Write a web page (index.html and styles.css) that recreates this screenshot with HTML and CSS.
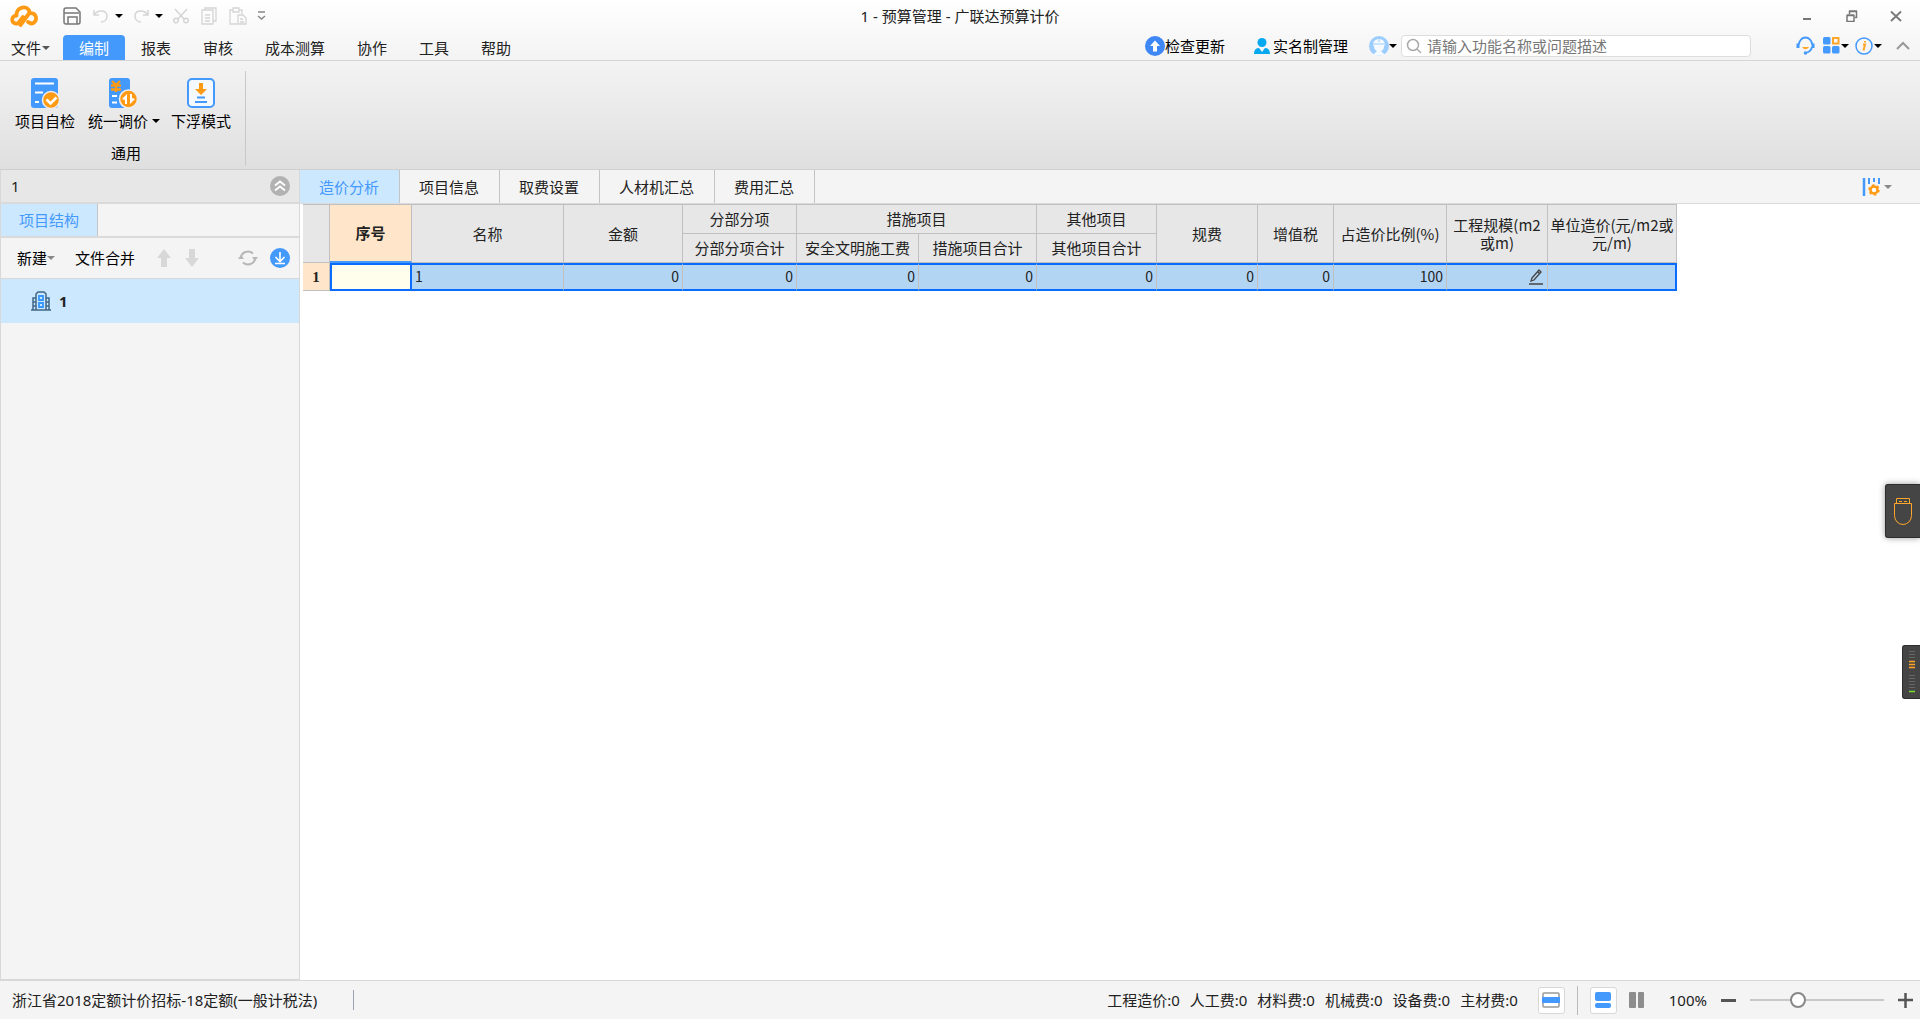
FILE: index.html
```html
<!DOCTYPE html>
<html lang="zh-CN">
<head>
<meta charset="utf-8">
<title>1 - 预算管理 - 广联达预算计价</title>
<link rel="stylesheet" href="styles.css">
</head>
<body>
<header class="top">
  <div class="titlebar">
    <div class="quick">
      <svg class="logo" width="30" height="24" viewBox="0 0 30 24" fill="none" stroke="#ff9a14" stroke-width="3.800" stroke-linecap="round" stroke-linejoin="round"><path d="M14 13L9 19.500C2 21 1 12 7.500 11.500C7 2 19 1 20.500 8M11.500 21L20 9.500C28 7 30 19 22 19.500L19 18"/></svg>
      <button class="tool" aria-label="保存"><svg width="18" height="18" viewBox="0 0 18 18" fill="none" stroke="#777" stroke-width="1.500"><path d="M3 1h10l4 4v10a2 2 0 0 1-2 2H3a2 2 0 0 1-2-2V3a2 2 0 0 1 2-2zM1 6h15M5 17V10h9v7"/></svg></button>
      <button class="tool undo" aria-label="撤销"><svg width="16" height="16" viewBox="0 0 16 16" fill="none" stroke="#d5d5d5" stroke-width="1.500"><path d="M1 2v5h5M1 7c4-6 13-5 13 1 0 4-3 6-6 6"/></svg><i class="caret"></i></button>
      <button class="tool redo" aria-label="恢复"><svg width="16" height="16" viewBox="0 0 16 16" fill="none" stroke="#d5d5d5" stroke-width="1.500"><path d="M15 2v5h-5M15 7C11 1 2 2 2 8c0 4 3 6 6 6"/></svg><i class="caret"></i></button>
      <button class="tool" aria-label="剪切"><svg width="16" height="16" viewBox="0 0 16 16" fill="none" stroke="#d5d5d5" stroke-width="1.500"><path d="M2 1l9 10M14 1L5 11"/><circle cx="3" cy="12.500" r="2.300"/><circle cx="13" cy="12.500" r="2.300"/></svg></button>
      <button class="tool" aria-label="复制"><svg width="16" height="18" viewBox="0 0 16 18" fill="none" stroke="#d5d5d5" stroke-width="1.300"><path d="M4 3V1h11v13h-3M1 3h11v14H1zM4 8h5M4 11h5M4 14h5"/></svg></button>
      <button class="tool" aria-label="粘贴"><svg width="18" height="18" viewBox="0 0 18 18" fill="none" stroke="#d5d5d5" stroke-width="1.300"><path d="M8 17H1V3h3M10 3h3v4M4 1h6v4H4zM9 8h5l3 3v6H9zM11 12h3M11 15h4"/></svg></button>
      <button class="tool custom" aria-label="自定义"><svg width="9" height="10" viewBox="0 0 9 10" fill="none" stroke="#888" stroke-width="1.500"><path d="M1 1h7M1 5l3.500 3L8 5"/></svg></button>
    </div>
    <h1 class="title">1 - 预算管理 - 广联达预算计价</h1>
    <div class="window">
      <button aria-label="最小化"><svg width="12" height="12" viewBox="0 0 12 12"><path d="M1 9h8" stroke="#777" stroke-width="2"/></svg></button>
      <button aria-label="还原"><svg width="12" height="12" viewBox="0 0 12 12" fill="none" stroke="#777"><path d="M1 5.500h7v6H1zM1 5h7M3.500 4V1.500h7v6H9M3 1h8" stroke-width="1.500"/></svg></button>
      <button aria-label="关闭"><svg width="12" height="12" viewBox="0 0 12 12"><path d="M1 1.500l10 9.500M11 1.500L1 11" stroke="#777" stroke-width="1.800"/></svg></button>
    </div>
  </div>
  <div class="menubar">
    <nav class="menu">
      <button class="file">文件<i class="caret"></i></button>
      <button class="on">编制</button><button>报表</button><button>审核</button><button>成本测算</button><button>协作</button><button>工具</button><button>帮助</button>
    </nav>
    <div class="account">
      <button class="update"><svg width="20" height="20" viewBox="0 0 20 20"><circle cx="10" cy="10" r="10" fill="#3f87f5"/><path d="M10 4.500L15 10h-3v5.500H8V10H5z" fill="#fff"/></svg>检查更新</button>
      <button class="real"><svg width="16" height="16" viewBox="0 0 16 16" fill="#06a8f0"><circle cx="8" cy="4.500" r="4.500"/><path d="M0 16c0-4 2-6 5-6l3 4 3-4c3 0 5 2 5 6z"/></svg>实名制管理</button>
      <button class="user" aria-label="账户"><svg width="20" height="20" viewBox="0 0 20 20"><circle cx="10" cy="10" r="10" fill="#9ccdfd"/><path d="M4 9c0-8 12-8 12 0l-1 1c0 3-1 4-3 5l4 4c-4 1-8 1-12 0l4-4c-2-1-3-2-3-5z" fill="#f5faff"/><path d="M4 8h12M10 2v4" stroke="#9ccdfd"/></svg><i class="caret"></i></button>
    </div>
    <label class="search"><svg width="16" height="16" viewBox="0 0 16 16" fill="none" stroke="#aaa" stroke-width="1.500"><circle cx="7" cy="7" r="5.500"/><path d="M11 11l4 4"/></svg><input type="search" aria-label="搜索" placeholder="请输入功能名称或问题描述"></label>
    <div class="help">
      <button aria-label="客服"><svg width="19" height="19" viewBox="0 0 19 19" fill="none" stroke="#4499fc" stroke-width="1.800"><path d="M3 8.500a6.500 7 0 0 1 13 0M16 11c-1 4-3 5-5 5.500"/><path d="M2 7.500v4.500M17 7.500v4.500" stroke-width="3"/><circle cx="9.500" cy="17" r="1.800" fill="#4499fc" stroke="none"/><path d="M6 11c2 3 5 3 7 0z" fill="#ffa62b" stroke="none"/></svg></button>
      <button aria-label="应用"><svg width="17" height="17" viewBox="0 0 17 17" fill="#4499fc"><rect y="0" width="7.500" height="7.500" rx="1.500"/><rect y="9" width="7.500" height="7.500" rx="1.500"/><rect x="9" y="9" width="7.500" height="7.500" rx="1.500"/><rect x="10" y="1" width="5.500" height="5.500" fill="none" stroke="#ffa62b" stroke-width="2"/></svg><i class="caret"></i></button>
      <button aria-label="关于"><svg width="18" height="18" viewBox="0 0 18 18" fill="none" stroke="#4499fc" stroke-width="1.500"><circle cx="9" cy="9" r="8"/><path d="M8 7.500h2l-1.500 6M10 4v1.500" stroke="#ffa62b" stroke-width="2"/></svg><i class="caret"></i></button>
      <button aria-label="收起功能区"><svg width="14" height="9" viewBox="0 0 14 9" fill="none" stroke="#999" stroke-width="2"><path d="M1 8l6-6 6 6"/></svg></button>
    </div>
  </div>
</header>

<section class="ribbon">
  <div class="group">
    <div class="commands">
      <button><svg width="30" height="32" viewBox="0 0 30 32"><rect x="1" y="1" width="27" height="30" rx="3" fill="#4499fc"/><path d="M5 6.500h19M5 15.500h8M5 25h4" stroke="#fff" stroke-width="2"/><circle cx="21" cy="23" r="8.500" fill="#ff9a14" stroke="#eee" stroke-width="1.500"/><path d="M16.500 22.500l4 4 6-6" fill="none" stroke="#fff" stroke-width="2.500"/></svg><span>项目自检</span></button>
      <button><svg width="30" height="32" viewBox="0 0 30 32"><rect x="1" y="1" width="21" height="30" rx="3" fill="#4499fc"/><path d="M4 4l4 4 4-4M3 8.500h10M3 12.500h10M8 8v7" stroke="#ff9a14" stroke-width="2.300" fill="none"/><path d="M4 19h5M4 25.500h5" stroke="#fff" stroke-width="2"/><circle cx="20.500" cy="22" r="9" fill="#ff9a14" stroke="#eee" stroke-width="1.500"/><path d="M14 22l5-5v10h-2v-4zM27 22l-5 5V17h2v4z" fill="#fff"/></svg><span>统一调价<i class="caret"></i></span></button>
      <button><svg width="30" height="32" viewBox="0 0 30 32"><rect x="2" y="2" width="26" height="28" rx="4" fill="#f4f9ff" stroke="#4499fc" stroke-width="2"/><path d="M13 6h4v6h4l-6 6-6-6h4z" fill="#ff9a14"/><path d="M11 20.500h8M9 25h12" stroke="#4499fc" stroke-width="2"/></svg><span>下浮模式</span></button>
    </div>
    <div class="caption">通用</div>
  </div>
</section>

<div class="workspace">
  <aside class="side">
    <div class="sidehead"><span>1</span><button aria-label="折叠"><svg width="20" height="20" viewBox="0 0 20 20"><circle cx="10" cy="10" r="10" fill="#b2b2b2"/><path d="M5 9.500l5-4 5 4M5 14.500l5-4 5 4" fill="none" stroke="#fff" stroke-width="2"/></svg></button></div>
    <div class="sidetabs"><button>项目结构</button></div>
    <div class="sidetools">
      <button class="new">新建<i class="caret"></i></button>
      <button class="merge">文件合并</button>
      <button class="up" aria-label="上移"><svg width="14" height="18" viewBox="0 0 14 18" fill="#d8d8d8"><path d="M7 0l7 9h-4v9H4V9H0z"/></svg></button>
      <button class="down" aria-label="下移"><svg width="14" height="18" viewBox="0 0 14 18" fill="#d8d8d8"><path d="M7 18l7-9h-4V0H4v9H0z"/></svg></button>
      <button class="refresh" aria-label="刷新"><svg width="20" height="16" viewBox="0 0 20 16" fill="none" stroke="#b8b8b8" stroke-width="2"><path d="M3 8a7 6.500 0 0 1 12-4.500M17 8a7 6.500 0 0 1-12 4.500"/><path d="M0 9l3-4 3 4zM14 7l3 4 3-4z" fill="#b8b8b8" stroke="none"/></svg></button>
      <button aria-label="下载"><svg width="20" height="20" viewBox="0 0 20 20"><circle cx="10" cy="10" r="10" fill="#4499fc"/><path d="M10 4v9M5.500 9l4.500 4.500L14.500 9M5 15.500h10" fill="none" stroke="#fff" stroke-width="1.600"/></svg></button>
    </div>
    <button class="node"><svg width="22" height="20" viewBox="0 0 22 20" fill="none" stroke="#3f6585" stroke-width="1.500"><path d="M1 19h20M3 19V7h3M19 19V7h-3M6 19V3l2-2h6l2 2v16M3 11h3M3 15h3M16 11h3M16 15h3"/><path d="M9 5h4v4H9zM9 12h4v4H9z" stroke="#3697ff" stroke-width="1.800"/></svg><b>1</b></button>
  </aside>

  <main class="main">
    <div class="tabs">
      <button class="on">造价分析</button><button>项目信息</button><button>取费设置</button><button>人材机汇总</button><button>费用汇总</button>
      <button class="settings" aria-label="列设置"><svg width="18" height="20" viewBox="0 0 18 20"><path d="M2 1v18" stroke="#4499fc" stroke-width="2.500"/><path d="M7 1v6M12 1v4M17 1v6" stroke="#4499fc" stroke-width="2"/><circle cx="12" cy="13" r="3.500" fill="#fff" stroke="#ff9a14" stroke-width="2.500"/><circle cx="12" cy="13" r="5" fill="none" stroke="#ff9a14" stroke-width="1.500" stroke-dasharray="2.600 2.600"/></svg><i class="caret"></i></button>
    </div>
    <div class="sheet">
      <table>
        <colgroup><col class="c1"><col class="c2"><col class="c3"><col class="c4"><col class="c5"><col class="c6"><col class="c7"><col class="c8"><col class="c9"><col class="c10"><col class="c11"><col class="c12"><col class="c13"></colgroup>
        <thead>
          <tr><td rowspan="2"></td><th rowspan="2" class="active">序号</th><th rowspan="2">名称</th><th rowspan="2">金额</th><th>分部分项</th><th colspan="2">措施项目</th><th>其他项目</th><th rowspan="2">规费</th><th rowspan="2">增值税</th><th rowspan="2">占造价比例(%)</th><th rowspan="2">工程规模(m2<br>或m)</th><th rowspan="2">单位造价(元/m2或<br>元/m)</th></tr>
          <tr><th>分部分项合计</th><th>安全文明施工费</th><th>措施项目合计</th><th>其他项目合计</th></tr>
        </thead>
        <tbody>
          <tr><th scope="row">1</th><td class="current"></td><td class="name">1</td><td>0</td><td>0</td><td>0</td><td>0</td><td>0</td><td>0</td><td>0</td><td>100</td><td><button class="edit" aria-label="编辑"><svg width="16" height="16" viewBox="0 0 16 16" fill="none" stroke="#444" stroke-width="1.300"><path d="M4 9l7-8 2 2-7 8-3 1zM10 3l2 2M1 15h14"/></svg></button></td><td></td></tr>
        </tbody>
      </table>
    </div>
  </main>
</div>

<footer class="status">
  <span class="standard">浙江省2018定额计价招标-18定额(一般计税法)</span>
  <div class="totals"><span>工程造价:0</span><span>人工费:0</span><span>材料费:0</span><span>机械费:0</span><span>设备费:0</span><span>主材费:0</span></div>
  <div class="views">
    <button class="box" aria-label="单行视图"><svg width="18" height="16" viewBox="0 0 18 16"><rect x="1" y="1" width="16" height="14" rx="1" fill="#fff" stroke="#999" stroke-width="1.500"/><path d="M0 5h18v6H0z" fill="#4499fc"/></svg></button>
    <i class="rule"></i>
    <button class="box" aria-label="上下布局"><svg width="16" height="16" viewBox="0 0 16 16" fill="#4499fc"><rect width="16" height="9" rx="2"/><rect y="11" width="16" height="5" rx="2"/></svg></button>
    <button class="split" aria-label="左右布局"><svg width="16" height="16" viewBox="0 0 16 16" fill="#8d8d8d"><rect width="7" height="16" rx="1"/><rect x="9" width="6" height="16" rx="1"/></svg></button>
  </div>
  <label class="percent" for="zoom">100%</label>
  <button aria-label="缩小"><svg width="16" height="16" viewBox="0 0 16 16"><path d="M0 8.500h15" stroke="#555" stroke-width="3"/></svg></button>
  <input id="zoom" type="range" min="0" max="100" value="34">
  <button aria-label="放大"><svg width="16" height="16" viewBox="0 0 16 16"><path d="M1 8h15M8.500 1v15" stroke="#555" stroke-width="2.500"/></svg></button>
</footer>

<button class="float usb" aria-label="加密锁"><svg width="20" height="28" viewBox="0 0 20 28" fill="none" stroke="#ffa62b"><path d="M1.500 6.500h17v12a8.500 9 0 0 1-17 0zM3.500 6V1.500h13V6M6 4.500h3M11 4.500h3"/></svg></button>
<button class="float meter" aria-label="状态"><svg width="6" height="42" viewBox="0 0 6 42" stroke="#666" stroke-width="1"><path d="M0 .5h6M0 3.500h6M0 6.500h6M0 24.500h6M0 27.500h6M0 30.500h6M0 33.500h6M0 36.500h6"/><path d="M0 10.500h6M0 13.500h6M0 16.500h6" stroke="#ffa62b" stroke-width="1.500"/><path d="M0 40.500h6" stroke="#7ddc30" stroke-width="1.500"/></svg></button>
</body>
</html>
```
FILE: styles.css
```css
* { box-sizing: border-box; }
body {
  margin: 0;
  min-height: 100vh;
  display: flex;
  flex-direction: column;
  font: 15px/20px "Noto Sans", "Noto Sans CJK SC", sans-serif;
  color: #222;
  background: #fff;
}
button {
  border: 0;
  padding: 0;
  background: none;
  font: inherit;
  color: inherit;
  display: flex;
  align-items: center;
  white-space: nowrap;
}
svg { display: block; flex: none; }
.caret {
  border: 4px solid transparent;
  border-top-color: #000;
  border-bottom: 0;
  flex: none;
}

/* title and menu */
.top { background: linear-gradient(#fff, #f3f3f3); border-bottom: 1px solid #d6d6d6; }
.titlebar { display: grid; grid-template-columns: 1fr auto 1fr; align-items: center; height: 31px; }
.quick { display: flex; align-items: center; gap: 12px; padding-left: 9px; }
.logo { margin-right: 12px; }
.undo, .redo { gap: 6px; margin-right: -2px; }
.custom { margin-left: -2px; }
.title { margin: 0; font-size: 15px; font-weight: 400; }
.window { display: flex; justify-content: flex-end; gap: 32px; padding-right: 18px; }
.menubar { display: flex; align-items: center; height: 29px; }
.menu { display: flex; align-items: flex-end; flex: 1; align-self: stretch; }
.menu button { height: 25px; padding: 0 16px; }
.menu .file { padding: 0 13px 0 11px; gap: 1px; }
.menu .file .caret { border-top-color: #555; }
.menu .on { background: #4499fc; color: #fff; border-radius: 4px 4px 0 0; }
.account { display: flex; align-items: center; color: #000; }
.update { margin-right: 29px; }
.real { gap: 3px; margin-right: 21px; }
.user { margin-right: 4px; }
.search {
  display: flex;
  align-items: center;
  gap: 5px;
  width: 350px;
  height: 22px;
  padding-left: 4px;
  border: 1px solid #ddd;
  border-radius: 4px;
  background: #fff;
}
.search input { flex: 1; min-width: 0; border: 0; padding: 0; outline: 0; background: none; font: inherit; }
.search input::placeholder { color: #777; }
.help { display: flex; align-items: center; gap: 6px; padding: 0 10px 0 45px; }
.help button { gap: 1px; }
.help button:nth-child(1) { margin-right: 2px; }
.help button:nth-child(4) { margin-left: 8px; }

/* ribbon */
.ribbon { display: flex; padding: 10px 0 3px; background: linear-gradient(#f3f3f3, #dfdfdf); border-bottom: 1px solid #cfcfcf; }
.group { padding: 6px 14px 0 15px; border-right: 1px solid #c8c8c8; color: #000; }
.commands { display: flex; gap: 11px; }
.commands button { flex-direction: column; gap: 2px; }
.commands span { display: flex; align-items: center; gap: 4px; }
.commands button:nth-child(2) svg { margin-right: 2px; }
.commands button:nth-child(1) { margin-right: 2px; }
.caption { text-align: center; margin: 12px 0 0 6px; height: 23px; }

/* project panel */
.workspace { flex: 1; display: flex; }
.side { width: 300px; flex: none; background: #f4f4f4; border: 1px solid #d8d8d8; border-top: 0; }
.sidehead { display: flex; justify-content: space-between; align-items: center; height: 34px; padding: 0 9px 0 10px; background: #e7e7e7; border-bottom: 2px solid #dadada; }
.sidetabs { height: 34px; border-bottom: 2px solid #dadada; }
.sidetabs button { height: 32px; padding: 0 18px; background: #cce8ff; color: #4499fc; border-right: 1px solid #c4c4c4; }
.sidetools { display: flex; align-items: center; height: 41px; padding: 0 9px 0 16px; border-bottom: 1px solid #d8d8d8; color: #000; }
.new .caret, .settings .caret { border-top-color: #888; }
.merge { margin-left: 20px; }
.up { margin-left: 22px; }
.down { margin-left: 14px; }
.refresh { margin: 0 12px 0 auto; }
.node { width: 100%; height: 44px; padding-left: 29px; gap: 7px; background: #cce8ff; }

/* work area */
.main { flex: 1; min-width: 0; }
.tabs { display: flex; height: 34px; background: #f4f4f4; border-bottom: 1px solid #dadada; }
.tabs button { padding: 0 20px 0 19px; border-right: 1px solid #c4c4c4; }
.tabs .on { background: #cce8ff; color: #4499fc; }
.tabs .settings { margin-left: auto; padding: 0 28px 0 0; border: 0; gap: 4px; }
.sheet { padding-left: 3px; overflow-x: auto; }
table { table-layout: fixed; width: 1374px; border-collapse: separate; border-spacing: 0; border-top: 1px solid #c0c0c0; }
.c1 { width: 27px; } .c2 { width: 82px; } .c3 { width: 152px; } .c4 { width: 119px; }
.c5 { width: 114px; } .c6 { width: 122px; } .c7 { width: 118px; } .c8 { width: 120px; }
.c9 { width: 101px; } .c10 { width: 76px; } .c11 { width: 113px; } .c12 { width: 101px; } .c13 { width: 129px; }
th, td { padding: 0; border-right: 1px solid #c0c0c0; border-bottom: 1px solid #c0c0c0; white-space: nowrap; }
thead th, thead td { height: 29px; background: #e7e7e7; font-weight: 400; line-height: 18px; font-family: "Noto Sans CJK SC", sans-serif; }
thead .active { background: #ffe6ca; font-weight: 700; border-bottom: 2px solid #4499fc; }
tbody th { height: 28px; background: #ffe6ca; font: bold 15px/20px "Liberation Serif", serif; }
tbody td {
  background: #b3d5f4;
  border-top: 2px solid #0a6cff;
  border-bottom: 2px solid #0a6cff;
  text-align: right;
  padding: 0 3px;
  font: 14px/22px "Noto Sans CJK SC", sans-serif;
  vertical-align: top;
}
tbody td:last-child { border-right: 2px solid #0a6cff; }
tbody .current { background: #fffdec; border: 2px solid #0a6cff; }
tbody .name { text-align: left; }
.edit { margin: 4px 0 0 auto; }

/* status bar */
.status { display: flex; align-items: center; height: 39px; padding: 0 7px 0 12px; background: #f4f4f4; border-top: 1px solid #d8d8d8; }
.standard { padding-right: 36px; border-right: 1px solid #9aa5b5; margin-right: auto; }
.totals { display: flex; gap: 10px; margin-right: 20px; }
.views { display: flex; align-items: center; gap: 12px; }
.box { width: 27px; height: 27px; justify-content: center; background: #fff; border: 1px solid #d8d8d8; border-radius: 3px; }
.rule { width: 1px; height: 29px; background: #bbb; }
.percent { margin: 0 14px 0 24px; }
input[type="range"] { appearance: none; width: 134px; height: 16px; margin: 0 13px; background: linear-gradient(#c8c8c8, #c8c8c8) center / 100% 2px no-repeat; }
input[type="range"]::-webkit-slider-thumb { appearance: none; width: 16px; height: 16px; border: 2px solid #888; border-radius: 50%; background: #fff; }

/* docked at the window's right edge */
.float { position: fixed; right: 0; height: 54px; background: #454545; border: 1px solid #2d2d2d; border-right: 0; border-radius: 3px 0 0 3px; justify-content: center; }
.usb { top: 484px; width: 35px; box-shadow: 0 0 6px #999; }
.meter { top: 645px; width: 18px; }
```
